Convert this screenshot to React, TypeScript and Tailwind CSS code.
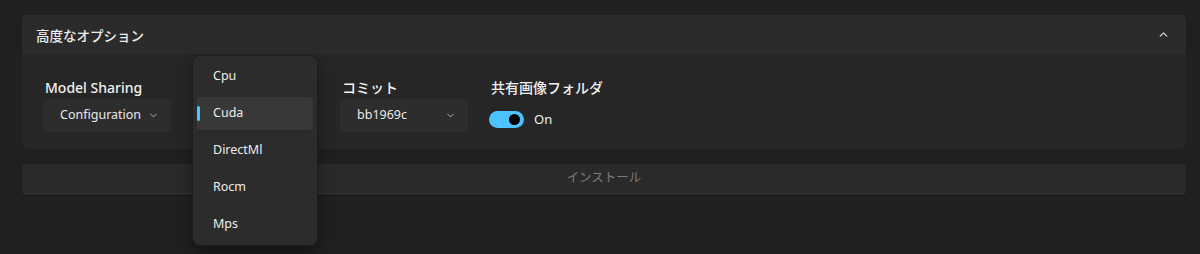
import { ChevronDown, ChevronUp } from "lucide-react";

const font = { fontFamily: '"Noto Sans", "Noto Sans CJK JP", sans-serif' };

function Select({ value, width }: { value: string; width: string }) {
  return (
    <div className={`flex h-[33px] ${width} items-center justify-between rounded-[4px] bg-[#2d2d2d] pl-[17px] pr-[12px] text-[12.5px] text-[#e8e8e8]`}>
      <span>{value}</span>
      <ChevronDown className="h-[11px] w-[11px] text-[#bdbdbd]" strokeWidth={2} />
    </div>
  );
}

function Field({ label, children, className = "" }: { label: string; children: React.ReactNode; className?: string }) {
  return (
    <div className={`flex flex-col gap-[1px] ${className}`}>
      <div className="h-[20px] pl-[2px] text-[14px] font-medium leading-[20px] text-[#f0f0f0]">{label}</div>
      {children}
    </div>
  );
}

const items = ["Cpu", "Cuda", "DirectMl", "Rocm", "Mps"];

export default function App() {
  return (
    <div style={font} className="h-[254px] w-full overflow-hidden bg-[#202020] pl-[22px] pr-[14px] pt-[15px]">
      <div className="relative">
        <div className="overflow-hidden rounded-[5px]">
          <div className="flex h-[39px] items-center justify-between bg-[#2b2b2b] pl-[14px] pr-[16px]">
            <span className="pt-[3px] text-[13.5px] font-medium text-[#eeeeee]">高度なオプション</span>
            <ChevronUp className="h-[13px] w-[13px] text-[#d0d0d0]" strokeWidth={2.5} />
          </div>
          <div className="flex h-[95px] items-start bg-[#262626] pl-[21px] pt-[24px]">
            <Field label="Model Sharing">
              <Select value="Configuration" width="w-[128px]" />
            </Field>
            <Field label="" className="ml-[25px]">
              <Select value="Cuda" width="w-[118px]" />
            </Field>
            <Field label="コミット" className="ml-[26px]">
              <Select value="bb1969c" width="w-[128px]" />
            </Field>
            <Field label="共有画像フォルダ" className="ml-[21px]">
              <div className="flex h-[33px] items-center gap-[10px] pt-[8px]">
                <div className="flex h-[17px] w-[35px] items-center justify-end rounded-full bg-[#4cc2ff] pr-[4px]">
                  <div className="h-[11px] w-[11px] rounded-full bg-black" />
                </div>
                <span className="text-[13px] text-[#f0f0f0]">On</span>
              </div>
            </Field>
          </div>
        </div>

        <div className="mt-[15px] flex h-[30px] items-center justify-center rounded-[4px] border-b border-[#363636] bg-[#2a2a2a] text-[12.5px] text-[#7c7c7c]">
          インストール
        </div>

        <div className="absolute left-[170px] top-[40px] w-[126px] rounded-[8px] border border-[#1d1d1d] bg-[#2c2c2c] px-[4px] py-[2px] shadow-[0_8px_16px_rgba(0,0,0,0.35)]">
          {items.map((it) => (
            <div key={it} className="py-[2px]">
              <div
                className={`relative flex h-[33px] items-center rounded-[4px] pl-[16px] text-[12.5px] text-[#ededed] ${it === "Cuda" ? "bg-[#383838]" : ""}`}
              >
                {it === "Cuda" && <div className="absolute left-0 top-[9px] h-[15px] w-[3px] rounded-full bg-[#4cc2ff]" />}
                {it}
              </div>
            </div>
          ))}
        </div>
      </div>
    </div>
  );
}
